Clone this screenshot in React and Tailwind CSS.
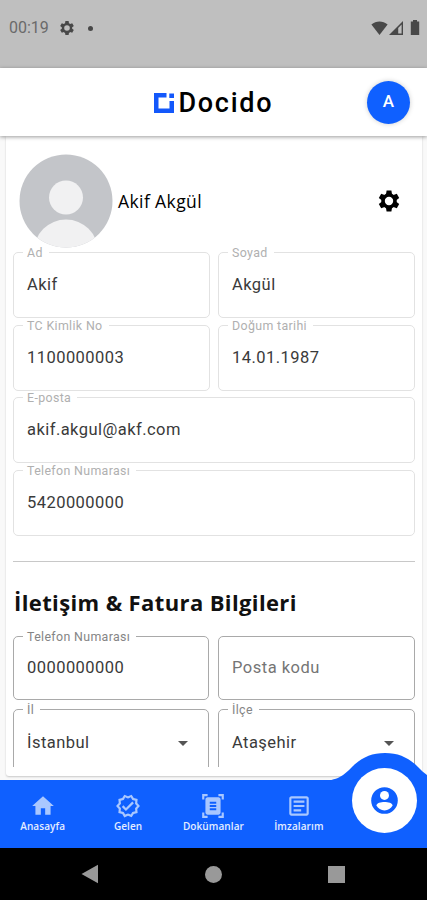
import clsx from "clsx";
import {
  MdArrowDropDown,
  MdDocumentScanner,
  MdHome,
  MdOutlineArticle,
  MdOutlineVerified
} from "react-icons/md";

const tabs = [
  { label: "Anasayfa", Icon: MdHome },
  { label: "Gelen", Icon: MdOutlineVerified },
  { label: "Dokümanlar", Icon: MdDocumentScanner },
  { label: "İmzalarım", Icon: MdOutlineArticle }
];

const GearIcon = ({ className }) => (
  <svg viewBox="0 0 24 24" className={className} fill="currentColor">
    <circle cx="12" cy="12" r="6" fill="none" stroke="currentColor" strokeWidth="3.6" />
    {[0, 60, 120, 180, 240, 300].map((angle) => (
      <path key={angle} d="M9.6 1.6h4.8l0.7 4.2h-6.2Z" transform={`rotate(${angle} 12 12)`} />
    ))}
  </svg>
);

const ProfileIcon = ({ className }) => (
  <svg viewBox="0 0 27 27" className={className}>
    <circle cx="13.5" cy="13.5" r="13.3" fill="#0f60ff" />
    <circle cx="13.5" cy="8.4" r="4.5" fill="#fff" />
    <path d="M5.4 18.6C5.4 15.8 10 14.9 13.5 14.9S21.6 15.8 21.6 18.6C20 21.6 17 23.4 13.5 23.4S7 21.6 5.4 18.6Z" fill="#fff" />
  </svg>
);

const StatusBar = () => (
  <div className="h-[68px] shrink-0 bg-[#bfbfbf] flex items-start justify-between pt-[18px] pl-[9px] pr-[7px] text-[#484848]">
    <div className="flex items-center h-5">
      <span className="w-[50px] text-[16px] leading-5 text-[#6a6a6a] whitespace-nowrap">00:19</span>
      <GearIcon className="size-4" />
      <span className="ml-[13px] size-[5px] rounded-full bg-[#484848]" />
    </div>
    <div className="flex items-center h-[19px]">
      <svg width="17" height="14" viewBox="0 0 17 14" fill="currentColor">
        <path d="M8.5 14 0.4 3.6C5 -0.6 12 -0.6 16.6 3.6Z" />
      </svg>
      <svg className="ml-px" width="15" height="14" viewBox="0 0 15 14">
        <path d="M0 14 14 0V14Z" fill="currentColor" />
        <path d="M9.2 7 12.6 3.4V12.6H9.2Z" fill="#bfbfbf" />
      </svg>
      <svg className="ml-[6px]" width="10" height="15" viewBox="0 0 10 15" fill="currentColor">
        <path d="M3 0h4v1.6h2.2v13.4h-8.4V1.6H3Z" />
      </svg>
    </div>
  </div>
);

const Header = () => (
  <header className="relative z-10 h-[68px] shrink-0 bg-white shadow-[0_1px_4px_rgba(0,0,0,0.4)] grid grid-cols-[1fr_auto_1fr] items-center">
    <div />
    <div className="flex items-center gap-[5px]">
      <svg className="mt-px" width="20" height="20" viewBox="0 0 20 20" fill="#1358fb">
        <path d="M0 0h12.5v4.5h-8v11h11V8H20v12H0Z" />
        <path d="M15.3 0.5H20V5h-4.7Z" />
      </svg>
      <span className="w-[95px] text-[27px] leading-8 pt-0.5 font-medium tracking-[1.7px] text-black">Docido</span>
    </div>
    <div className="justify-self-end mr-[17px] size-[43px] rounded-full bg-[#0f60ff] text-white text-[17px] font-medium flex items-center justify-center shadow-[0_0_5px_rgba(0,0,0,0.2)]">
      A
    </div>
  </header>
);

const Avatar = () => (
  <svg width="94" height="94" viewBox="0 0 94 94">
    <defs>
      <clipPath id="face">
        <circle cx="47" cy="47" r="46.5" />
      </clipPath>
    </defs>
    <g clipPath="url(#face)">
      <rect width="94" height="94" fill="#c3c5c9" />
      <circle cx="47" cy="43.5" r="17" fill="#f1f1f2" />
      <circle cx="47" cy="97.5" r="32" fill="#f1f1f2" />
    </g>
  </svg>
);

const Field = ({ label, value, placeholder, select, strong, className }) => (
  <div
    className={clsx(
      "relative rounded-[5px] border pl-[13px] pr-[13px] flex items-center justify-between",
      strong ? "h-[64px] border-[#a9a9a9]" : "h-[66px] border-[#e2e2e2]",
      className
    )}
  >
    {label ? (
      <span
        className={clsx(
          "absolute left-[9px] -top-[7px] pl-1 pr-[6px] bg-white text-[12.4px] leading-[13px] tracking-[0.35px] whitespace-nowrap",
          strong ? "text-[#858585]" : "text-[#b0b0b0]"
        )}
      >
        {label}
      </span>
    ) : null}
    {value ? (
      <span className={clsx("text-[16.5px] leading-6 tracking-[0.45px] text-[#3a3a3a]", select && "pt-[3px]")}>{value}</span>
    ) : (
      <span className="text-[16.5px] leading-6 tracking-[0.5px] text-[#757575]">{placeholder}</span>
    )}
    {select ? <MdArrowDropDown className="size-6 mt-[3px] text-[#555]" /> : null}
  </div>
);

const BottomNav = () => (
  <nav className="relative z-10 h-[68px] shrink-0 bg-[#0f60ff] flex">
    <svg className="absolute right-0 -top-[27px]" width="107" height="28" viewBox="0 0 107 28" fill="#0f60ff">
      <path d="M0 28C18 28 24 22 32 14C41 5 51 0 65 0C79 0 89 5 98 14C101 17 104 20 107 22V28Z" />
    </svg>
    {tabs.map(({ label, Icon }) => (
      <div key={label} className="w-[85.4px] flex flex-col items-center pt-[13px]">
        <Icon className="size-[26px] text-[#a9c7ff]" />
        <span className="font-['Open_Sans'] text-[10px] leading-[14px] font-semibold tracking-[0.1px] text-[#e4edff] whitespace-nowrap">{label}</span>
      </div>
    ))}
    <div className="absolute left-[352px] -top-3 size-[65px] rounded-full bg-white flex items-center justify-center">
      <ProfileIcon className="size-[27px]" />
    </div>
  </nav>
);

const App = () => {
  return (
    <div className="w-[427px] h-[900px] overflow-hidden flex flex-col bg-[#f9f9f9] font-[Roboto,sans-serif]">
      <StatusBar />
      <Header />

      <main className="flex-1 min-h-0 ml-[6px] mr-[5px] mb-1 bg-white rounded-b-[3px] shadow-[0_1px_2px_rgba(0,0,0,0.2)] px-[7px] pb-[9px]">
        <div className="h-full overflow-hidden">
          <div className="flex items-center pt-[18px] pl-[6px] pr-[14px] h-[112px]">
            <Avatar />
            <span className="ml-[5px] font-['Open_Sans'] text-[17.5px] font-medium tracking-[0.4px] text-black flex-1">Akif Akgül</span>
            <GearIcon className="size-6 text-black" />
          </div>

          <div className="grid grid-cols-2 gap-x-[8px] gap-y-[6.7px] mt-1">
            <Field label="Ad" value="Akif" />
            <Field label="Soyad" value="Akgül" />
            <Field label="TC Kimlik No" value="1100000003" />
            <Field label="Doğum tarihi" value="14.01.1987" />
            <Field label="E-posta" value="akif.akgul@akf.com" className="col-span-2" />
            <Field label="Telefon Numarası" value="5420000000" className="col-span-2" />
          </div>

          <div className="mt-[25px] h-px bg-[#c8c8c8]" />
          <h2 className="mt-[24px] ml-px font-['Open_Sans'] text-[22px] leading-8 font-bold tracking-[0.38px] text-[#111] whitespace-nowrap">
            İletişim & Fatura Bilgileri
          </h2>

          <div className="grid grid-cols-[196px_197px] justify-between gap-y-[9px] mt-[18px]">
            <Field strong label="Telefon Numarası" value="0000000000" />
            <Field strong placeholder="Posta kodu" />
            <Field strong select label="İl" value="İstanbul" />
            <Field strong select label="İlçe" value="Ataşehir" />
          </div>
        </div>
      </main>

      <BottomNav />

      <div className="h-[52px] shrink-0 bg-black flex items-center justify-between pl-[81px] pr-[82px]">
        <svg width="18" height="20" viewBox="0 0 18 20" fill="#999">
          <path d="M0.5 10 17 0.8V19.2Z" />
        </svg>
        <span className="size-[17px] rounded-full bg-[#999]" />
        <span className="size-[17px] bg-[#999]" />
      </div>
    </div>
  );
};

export default App;
